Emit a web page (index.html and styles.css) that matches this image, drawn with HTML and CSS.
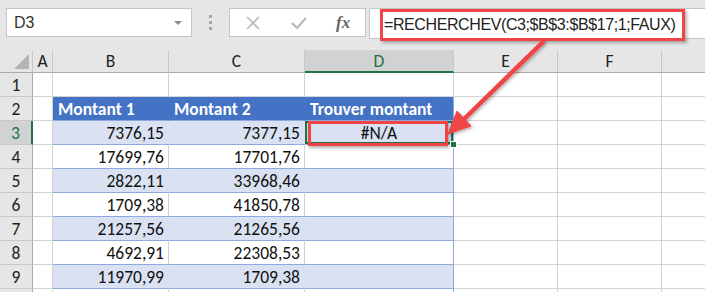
FILE: index.html
```html
<!DOCTYPE html>
<html lang="fr">
<head>
    <meta charset="UTF-8">
    <title>RECHERCHEV - #N/A</title>
    <link rel="stylesheet" href="styles.css">
</head>
<body>

<div class="app">
    <div class="formula-bar">
        <div class="name-box">
            <span>D3</span>
            <span class="caret"></span>
        </div>
        <div class="grip"><i></i><i></i><i></i></div>
        <div class="fx-buttons">
            <svg class="btn-icon" width="14" height="14" viewBox="0 0 14 14">
                <path d="M1 1 L13 13 M13 1 L1 13" stroke="#b9b9b9" stroke-width="1.6" fill="none"/>
            </svg>
            <svg class="btn-icon" width="16" height="14" viewBox="0 0 16 14">
                <path d="M1 7 L6 12 L15 2" stroke="#b9b9b9" stroke-width="2.2" fill="none"/>
            </svg>
            <span class="fx">fx</span>
        </div>
        <div class="formula-input">
            <span class="formula-text">=RECHERCHEV(C3;$B$3:$B$17;1;FAUX)</span>
        </div>
    </div>

    <div class="sheet">
        <div class="row col-headers">
            <div class="cell rh corner"><span class="tri"></span></div>
            <div class="cell w-a">A</div>
            <div class="cell w-b">B</div>
            <div class="cell w-c">C</div>
            <div class="cell w-d active-col">D</div>
            <div class="cell w-e">E</div>
            <div class="cell w-f">F</div>
            <div class="cell w-g"></div>
        </div>

        <div class="row">
            <div class="cell rh">1</div>
            <div class="cell w-a"></div>
            <div class="cell w-b"></div>
            <div class="cell w-c"></div>
            <div class="cell w-d"></div>
            <div class="cell w-e"></div>
            <div class="cell w-f"></div>
            <div class="cell w-g"></div>
        </div>

        <div class="row">
            <div class="cell rh">2</div>
            <div class="cell w-a"></div>
            <div class="cell w-b th">Montant 1</div>
            <div class="cell w-c th">Montant 2</div>
            <div class="cell w-d th last">Trouver montant</div>
            <div class="cell w-e"></div>
            <div class="cell w-f"></div>
            <div class="cell w-g"></div>
        </div>

        <div class="row">
            <div class="cell rh active-row">3</div>
            <div class="cell w-a"></div>
            <div class="cell w-b num band">7376,15</div>
            <div class="cell w-c num band">7377,15</div>
            <div class="cell w-d band last selected">
                #N/A
                <span class="callout"></span>
                <span class="handle"></span>
            </div>
            <div class="cell w-e"></div>
            <div class="cell w-f"></div>
            <div class="cell w-g"></div>
        </div>

        <div class="row">
            <div class="cell rh">4</div>
            <div class="cell w-a"></div>
            <div class="cell w-b num plain">17699,76</div>
            <div class="cell w-c num plain">17701,76</div>
            <div class="cell w-d plain last"></div>
            <div class="cell w-e"></div>
            <div class="cell w-f"></div>
            <div class="cell w-g"></div>
        </div>

        <div class="row">
            <div class="cell rh">5</div>
            <div class="cell w-a"></div>
            <div class="cell w-b num band">2822,11</div>
            <div class="cell w-c num band">33968,46</div>
            <div class="cell w-d band last"></div>
            <div class="cell w-e"></div>
            <div class="cell w-f"></div>
            <div class="cell w-g"></div>
        </div>

        <div class="row">
            <div class="cell rh">6</div>
            <div class="cell w-a"></div>
            <div class="cell w-b num plain">1709,38</div>
            <div class="cell w-c num plain">41850,78</div>
            <div class="cell w-d plain last"></div>
            <div class="cell w-e"></div>
            <div class="cell w-f"></div>
            <div class="cell w-g"></div>
        </div>

        <div class="row">
            <div class="cell rh">7</div>
            <div class="cell w-a"></div>
            <div class="cell w-b num band">21257,56</div>
            <div class="cell w-c num band">21265,56</div>
            <div class="cell w-d band last"></div>
            <div class="cell w-e"></div>
            <div class="cell w-f"></div>
            <div class="cell w-g"></div>
        </div>

        <div class="row">
            <div class="cell rh">8</div>
            <div class="cell w-a"></div>
            <div class="cell w-b num plain">4692,91</div>
            <div class="cell w-c num plain">22308,53</div>
            <div class="cell w-d plain last"></div>
            <div class="cell w-e"></div>
            <div class="cell w-f"></div>
            <div class="cell w-g"></div>
        </div>

        <div class="row">
            <div class="cell rh">9</div>
            <div class="cell w-a"></div>
            <div class="cell w-b num band">11970,99</div>
            <div class="cell w-c num band">1709,38</div>
            <div class="cell w-d band last"></div>
            <div class="cell w-e"></div>
            <div class="cell w-f"></div>
            <div class="cell w-g"></div>
        </div>

        <div class="row">
            <div class="cell rh"></div>
            <div class="cell w-a"></div>
            <div class="cell w-b plain"></div>
            <div class="cell w-c plain"></div>
            <div class="cell w-d plain last"></div>
            <div class="cell w-e"></div>
            <div class="cell w-f"></div>
            <div class="cell w-g"></div>
        </div>
    </div>

    <!-- annotation arrow from the formula to D3 -->
    <svg class="arrow" width="705" height="292" viewBox="0 0 705 292">
        <defs>
            <filter id="shadow" x="-20%" y="-20%" width="140%" height="140%">
                <feDropShadow dx="1.5" dy="1.5" stdDeviation="1.5" flood-color="#000" flood-opacity="0.3"/>
            </filter>
        </defs>
        <g filter="url(#shadow)" fill="#ef4547" stroke="#ef4547">
            <line x1="543" y1="42" x2="462" y2="121" stroke-width="4.5" stroke-linecap="round"/>
            <polygon points="448,134 457,111 471,126" stroke-width="1" stroke-linejoin="round"/>
        </g>
    </svg>
</div>

</body>
</html>
```

FILE: styles.css
```css
body {
    margin: 0;
    width: 705px;
    height: 292px;
    overflow: hidden;
    background: #fff;
    font-family: 'Carlito', 'Liberation Sans', sans-serif;
    color: #111;
}

.app {
    position: relative;
    width: 705px;
    height: 292px;
    overflow: hidden;
}

/* formula bar */

.formula-bar {
    height: 50px;
    background: #e6e6e6;
    display: flex;
    align-items: flex-start;
    padding-top: 8px;
    box-sizing: border-box;
}

.name-box {
    margin-left: 6px;
    width: 186px;
    height: 29px;
    box-sizing: border-box;
    background: #fff;
    border: 1px solid #c6c6c6;
    display: flex;
    align-items: center;
    justify-content: space-between;
    padding: 0 9px 0 7px;
    font-family: 'Liberation Sans', sans-serif;
    font-size: 16px;
    color: #333;
}

.caret {
    width: 0;
    height: 0;
    border-left: 4px solid transparent;
    border-right: 4px solid transparent;
    border-top: 4px solid #8a8a8a;
}

.grip {
    width: 37px;
    height: 29px;
    display: flex;
    flex-direction: column;
    align-items: center;
    justify-content: center;
    gap: 3px;
}

.grip i {
    display: block;
    width: 3px;
    height: 3px;
    background: #a8a8a8;
}

.fx-buttons {
    width: 137px;
    height: 29px;
    box-sizing: border-box;
    background: #fff;
    border: 1px solid #c6c6c6;
    display: flex;
    align-items: center;
    padding-left: 16px;
    gap: 31px;
}

.fx {
    font-family: 'Liberation Serif', serif;
    font-style: italic;
    font-weight: bold;
    font-size: 17px;
    color: #666;
    margin-left: -2px;
}

.formula-input {
    margin-left: 3px;
    flex: 1;
    height: 29px;
    background: #fff;
    border: 1px solid #c6c6c6;
    border-right: none;
    display: flex;
    align-items: flex-start;
}

.formula-text {
    margin: 0 0 0 10px;
    width: 305px;
    height: 32px;
    box-sizing: border-box;
    border: 3px solid #ef4547;
    box-shadow: 2px 2px 3px rgba(0, 0, 0, 0.3);
    padding-left: 1px;
    font-family: 'Liberation Sans', sans-serif;
    font-size: 16px;
    letter-spacing: -0.4px;
    line-height: 26px;
    color: #222;
    white-space: nowrap;
}

/* grid */

.row {
    display: flex;
    height: 24px;
}

.cell {
    height: 24px;
    box-sizing: border-box;
    border-right: 1px solid #d4d4d4;
    border-bottom: 1px solid #d4d4d4;
    font-size: 17.5px;
    line-height: 24px;
    white-space: nowrap;
    flex: none;
}

.rh {
    width: 33px;
    background: #e6e6e6;
    border-right-color: #ababab;
    border-bottom-color: #c8c8c8;
    text-align: center;
    color: #222;
}

.w-a { width: 20px; }
.w-b { width: 116px; }
.w-c { width: 136px; }
.w-d { width: 149px; }
.w-e { width: 104px; }
.w-f { width: 104px; }
.w-g { width: 60px; }

.col-headers {
    height: 23px;
}

.col-headers .cell {
    height: 23px;
    line-height: 23px;
    background: #e6e6e6;
    border-right-color: #c8c8c8;
    border-bottom-color: #ababab;
    text-align: center;
    color: #222;
}

.corner {
    position: relative;
}

.tri {
    position: absolute;
    right: 3px;
    bottom: 3px;
    width: 0;
    height: 0;
    border-left: 15px solid transparent;
    border-bottom: 15px solid #b4b4b4;
}

.col-headers .active-col {
    background: #d2d2d2;
    color: #217346;
    border-bottom: 2px solid #217346;
}

.rh.active-row {
    background: #d2d2d2;
    color: #217346;
    border-right: 2px solid #217346;
}

/* table */

.th {
    background: #4472c4;
    color: #fff;
    font-weight: bold;
    padding-left: 5px;
    border-right-color: #4472c4;
    border-bottom-color: #8ea9db;
}

.num {
    text-align: right;
    padding-right: 4px;
}

.band {
    background: #d9e1f2;
    border-right-color: #d9e1f2;
    border-bottom-color: #8ea9db;
}

.plain {
    border-bottom-color: #8ea9db;
}

.last {
    border-right-color: #8ea9db;
}

.selected {
    position: relative;
    text-align: center;
    box-shadow: inset 0 0 0 2px #217346;
}

.callout {
    position: absolute;
    left: 3px;
    right: 5px;
    top: 0;
    bottom: -2px;
    border: 3px solid #ef4547;
    box-shadow: 1px 2px 3px rgba(0, 0, 0, 0.3);
}

.handle {
    position: absolute;
    right: -4px;
    bottom: -4px;
    width: 5px;
    height: 5px;
    background: #217346;
    border: 1px solid #fff;
}

.arrow {
    position: absolute;
    left: 0;
    top: 0;
    pointer-events: none;
}
```
